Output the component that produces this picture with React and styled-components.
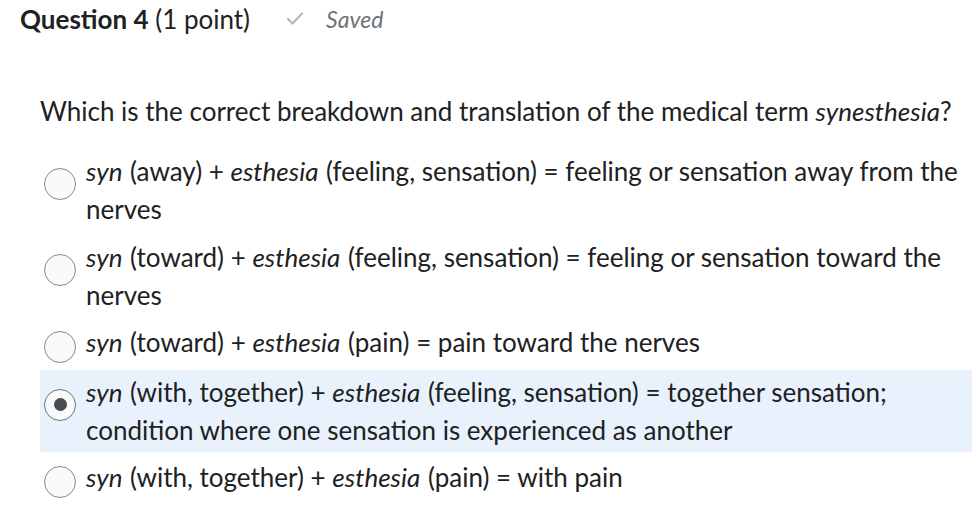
import React, { useState } from "react";
import styled, { createGlobalStyle } from "styled-components";

const GlobalStyle = createGlobalStyle`
  html, body {
    margin: 0;
    padding: 0;
    background: #fff;
  }
  body {
    font-family: Lato, "Noto Sans", sans-serif;
    color: #202122;
  }
`;

const options = [
  {
    id: 1,
    multi: true,
    parts: [["syn", " (away) + "], ["esthesia", " (feeling, sensation) = feeling or sensation away from the nerves"]],
  },
  {
    id: 2,
    multi: true,
    parts: [["syn", " (toward) + "], ["esthesia", " (feeling, sensation) = feeling or sensation toward the nerves"]],
  },
  {
    id: 3,
    parts: [["syn", " (toward) + "], ["esthesia", " (pain) = pain toward the nerves"]],
  },
  {
    id: 4,
    multi: true,
    parts: [
      ["syn", " (with, together) + "],
      ["esthesia", " (feeling, sensation) = together sensation; condition where one sensation is experienced as another"],
    ],
  },
  {
    id: 5,
    parts: [["syn", " (with, together) + "], ["esthesia", " (pain) = with pain"]],
  },
];

const Question = () => {
  const [picked, setPicked] = useState(4);

  return (
    <>
      <GlobalStyle />
      <Wrapper>
        <Header>
          <Title>
            <strong>Question 4</strong> (1 point)
          </Title>
          <Status>
            <svg width="18" height="15" viewBox="0 0 18 15" fill="none">
              <path d="M2 8 L6.5 12.5 L16 2.5" stroke="#b5b8bb" strokeWidth="2.2" strokeLinecap="round" strokeLinejoin="round" />
            </svg>
            <span>Saved</span>
          </Status>
        </Header>

        <Prompt>
          Which is the correct breakdown and translation of the medical term <em>synesthesia</em>?
        </Prompt>

        <List>
          {options.map((opt) => (
            <Option key={opt.id} $selected={picked === opt.id} onClick={() => setPicked(opt.id)}>
              <Radio $multi={opt.multi} $checked={picked === opt.id} />
              <Label>
                {opt.parts.map(([term, rest], i) => (
                  <React.Fragment key={i}>
                    <em>{term}</em>
                    {rest}
                  </React.Fragment>
                ))}
              </Label>
            </Option>
          ))}
        </List>
      </Wrapper>
    </>
  );
};

const Wrapper = styled.section`
  width: 972px;
  height: 508px;
  overflow: hidden;
  box-sizing: border-box;
  padding: 3px 0 0 20px;
`;

const Header = styled.div`
  display: flex;
  align-items: center;
  height: 32px;
  line-height: 32px;
`;

const Title = styled.h2`
  margin: 0 36px 0 0;
  font-size: 26px;
  font-weight: 400;
  color: #202122;

  strong {
    font-weight: 700;
  }
`;

const Status = styled.div`
  display: flex;
  align-items: center;
  gap: 22px;
  font-size: 23px;
  font-style: italic;
  color: #6e7376;

  svg {
    margin-top: -2px;
  }
`;

const Prompt = styled.p`
  margin: 57px 0 0 20px;
  font-size: 26px;
  line-height: 38px;
`;

const List = styled.div`
  display: flex;
  flex-direction: column;
  gap: 3.5px;
  margin-top: 19px;
`;

const Option = styled.label`
  display: flex;
  align-items: flex-start;
  gap: 10px;
  padding: 3px 0 3px 4px;
  margin-left: 20px;
  background: ${(p) => (p.$selected ? "#e9f2fc" : "transparent")};
  cursor: pointer;
`;

const Radio = styled.span`
  flex: 0 0 auto;
  position: relative;
  box-sizing: border-box;
  width: 32px;
  height: 32px;
  margin-top: ${(p) => (p.$multi ? "16px" : "8px")};
  border-radius: 50%;
  border: 1px solid ${(p) => (p.$checked ? "#6e7376" : "#85898d")};
  background: #f9fafb;

  &::after {
    content: "";
    display: ${(p) => (p.$checked ? "block" : "none")};
    position: absolute;
    left: 50%;
    top: 50%;
    width: 13px;
    height: 13px;
    margin: -6.5px 0 0 -6.5px;
    border-radius: 50%;
    background: #494c4e;
  }
`;

const Label = styled.div`
  font-size: 26px;
  line-height: 38px;
  color: #202122;

  em {
    padding-right: 1px;
  }
`;

export default Question;
